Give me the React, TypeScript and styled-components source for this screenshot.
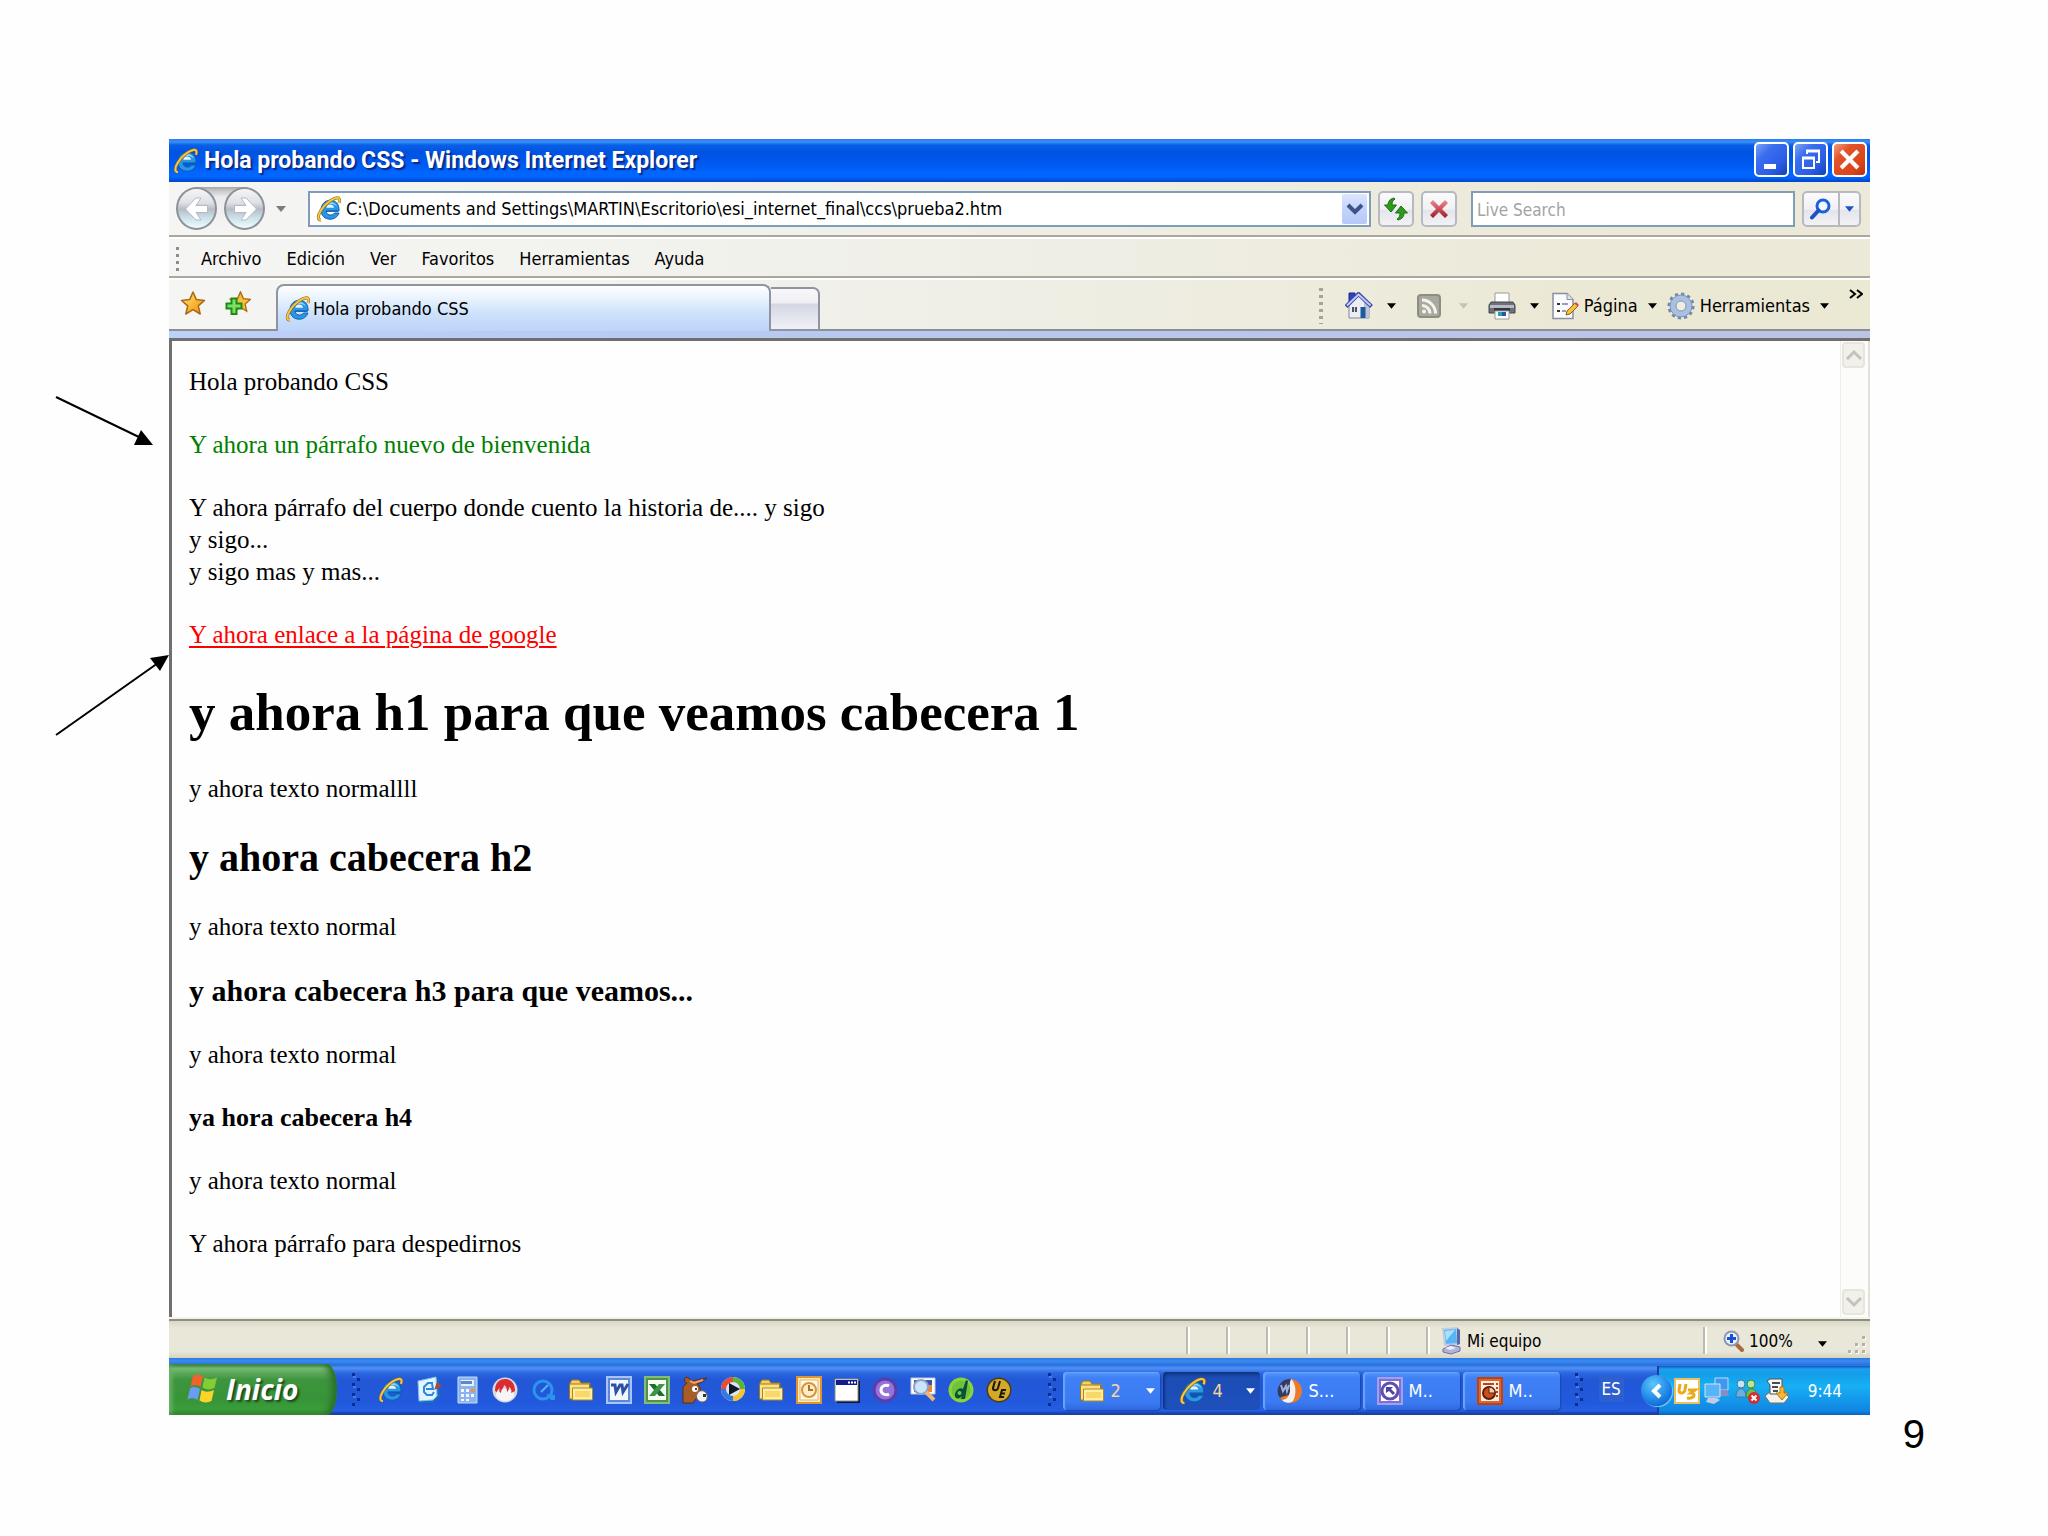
import React from "react";
import styled, { createGlobalStyle, css } from "styled-components";

const uiFont = `"DejaVu Sans Condensed", "Noto Sans", sans-serif`;
const pageFont = `"Liberation Serif", "Times New Roman", serif`;

const GlobalStyle = createGlobalStyle`
  *, *::before, *::after { box-sizing: border-box; }
  body { margin: 0; background: #fefefe; }
  button, input { font: inherit; color: inherit; }
  button { padding: 0; border: 0; background: none; }
`;

/* ---------- slide ---------- */

const Slide = styled.div`
  position: relative;
  display: flex;
  flex-direction: column;
  min-height: 100vh;
  padding: 139px 178px 0 169px;
  font-family: ${uiFont};
`;

const SlideFooter = styled.footer`
  display: flex;
  justify-content: flex-end;
  height: 121px;
  margin-right: -55px;
  font: 40px/38px "Liberation Sans", Arial, sans-serif;
  color: #000;
`;

const Arrow = styled.svg<{ $left: number; $top: number }>`
  position: absolute;
  left: ${(p) => p.$left}px;
  top: ${(p) => p.$top}px;
  overflow: visible;
`;

/* ---------- browser window ---------- */

const Window = styled.main`
  display: flex;
  flex: 1;
  flex-direction: column;
  background: #ece9d8;
`;

const TitleBar = styled.header`
  display: flex;
  align-items: center;
  gap: 5px;
  height: 43px;
  padding: 0 3px 0 4px;
  background: linear-gradient(#2a7cf0 0, #3a8ef6 3px, #0a5fe8 6px, #0053e1 13px, #0058ee 24px, #0066ff 34px, #0066ff 38px, #0049d2 42px);
`;

const Title = styled.h1`
  flex: 1;
  margin: 0;
  font: bold 23px/28px Roboto, sans-serif;
  color: #fff;
  text-shadow: 2px 2px 1px #0a2a8c;
`;

const Caption = styled.div`
  display: flex;
  gap: 4px;
  margin-bottom: 2px;
`;

const CaptionButton = styled.button<{ $close?: boolean }>`
  display: grid;
  place-items: center;
  width: 35px;
  height: 35px;
  border: 2px solid #fff;
  border-radius: 5px;
  background: ${(p) =>
    p.$close
      ? "linear-gradient(135deg, #f0a080 0, #e2522a 30%, #dc4418 75%, #b8300c)"
      : "linear-gradient(135deg, #7ea4f4 0, #3c6ef0 30%, #2a5ce6 70%, #1440b8)"};
`;

const toolbarPaint = css`
  background: linear-gradient(90deg, #f5f5f4 0, #f1f1ec 35%, #ece9d8 85%);
  border-bottom: 2px solid #aaa89c;
`;

const AddressBar = styled.div`
  display: flex;
  align-items: center;
  height: 55px;
  padding: 0 9px 0 7px;
  ${toolbarPaint}
`;

const NavButtons = styled.div`
  display: flex;
  gap: 7px;
  margin-right: 10px;
  border-radius: 22px;
  background: linear-gradient(#a8a8a8 0, #c9cacc 4px, #ececee 10px, #f4f4f5);
`;

const NavButton = styled.button`
  display: grid;
  place-items: center;
  width: 41px;
  height: 43px;
  border: 2px solid #8d9299;
  border-radius: 50%;
  background: linear-gradient(#f4f5f6 0, #dfe1e5 35%, #b6bcc6 52%, #cde3ea 75%, #effcfe);
`;

const AddressField = styled.div`
  display: flex;
  flex: 1;
  align-items: center;
  gap: 4px;
  height: 36px;
  margin-left: 21px;
  padding: 0 2px 0 6px;
  border: 2px solid #7f9db9;
  background: #fff;
`;

const AddressInput = styled.input`
  flex: 1;
  min-width: 0;
  padding: 0;
  border: 0;
  outline: 0;
  background: none;
  font-size: 18px;
  line-height: 24px;
  color: #000;
`;

const DropButton = styled.button`
  display: grid;
  place-items: center;
  width: 25px;
  height: 30px;
  border-radius: 2px;
  background: linear-gradient(#dce6fd, #c3d3fb 50%, #b5c8f8);
`;

const ToolButton = styled.button`
  display: grid;
  place-items: center;
  width: 36px;
  height: 36px;
  margin-left: 7px;
  border: 2px solid #b7b9c2;
  border-radius: 5px;
  background: linear-gradient(#fbfbfc, #f1f1f4 50%, #e4e5ec 55%, #f2f2f5);
`;

const SearchField = styled.input`
  width: 324px;
  height: 36px;
  margin: 0 0 0 14px;
  padding: 2px 4px 0;
  border: 2px solid #7f9db9;
  border-radius: 0;
  background: #fff;
  font-size: 17px;
  &::placeholder { color: #a3a3a3; opacity: 1; }
`;

const SearchButtons = styled.div`
  display: flex;
  height: 36px;
  margin-left: 7px;
  border: 2px solid #b7b9c2;
  border-radius: 5px;
  background: linear-gradient(#fbfbfc, #f1f1f4 50%, #e4e5ec 55%, #f2f2f5);
  button { display: grid; place-items: center; width: 34px; }
  button + button { width: 21px; border-left: 2px solid #b7b9c2; }
`;

const MenuBar = styled.nav`
  display: flex;
  align-items: center;
  gap: 25px;
  height: 41px;
  padding: 2px 7px 0;
  border-top: 2px solid #fff;
  ${toolbarPaint}
`;

const MenuItem = styled.button`
  font-size: 18px;
  line-height: 24px;
  color: #000;
`;

const MenuGrip = styled.span`
  width: 3px;
  height: 24px;
  margin-right: -3px;
  background: repeating-linear-gradient(#8e8d88 0 3px, transparent 3px 7px);
`;

const TabRow = styled.div`
  display: flex;
  align-items: flex-end;
  height: 53px;
  padding-top: 4px;
  background: linear-gradient(90deg, #f5f5f4 0, #f1f1ec 35%, #ebe8d4 85%);
  border-top: 2px solid #fff;
`;

const Favorites = styled.div`
  display: flex;
  align-items: center;
  gap: 19px;
  align-self: stretch;
  width: 107px;
  padding: 0 0 2px 11px;
  border-bottom: 2px solid #8d8f98;
`;

const Tab = styled.button`
  display: flex;
  align-items: center;
  gap: 2px;
  width: 495px;
  align-self: stretch;
  padding: 0 0 0 7px;
  border: 2px solid #8d94a2;
  border-bottom: 0;
  border-radius: 8px 8px 0 0;
  background: linear-gradient(#fff 0, #e6f1fd 14px, #cde1fb 28px, #bdd4fa);
  font-size: 18px;
  color: #000;
`;

const NewTab = styled.button`
  width: 49px;
  height: 44px;
  border: 2px solid #9093a0;
  border-left: 0;
  border-radius: 0 7px 0 0;
  background: linear-gradient(#f8f8fa 0, #eeeef5 14px, #d4d6e4 15px, #f0f1f6);
`;

const Commands = styled.div`
  display: flex;
  flex: 1;
  align-items: center;
  justify-content: flex-end;
  align-self: stretch;
  padding: 0 7px 2px 0;
  border-bottom: 2px solid #8d8f98;
`;

const CommandGrip = styled.span`
  width: 4px;
  height: 36px;
  margin-right: 22px;
  background: repeating-linear-gradient(#a5a498 0 3px, transparent 3px 7px);
`;

const Command = styled.button<{ $after: number; $gap?: number }>`
  display: flex;
  align-items: center;
  gap: ${(p) => p.$gap ?? 5}px;
  margin-right: ${(p) => p.$after}px;
  font-size: 18px;
  line-height: 24px;
  color: #000;
  svg:last-child { margin-left: 5px; }
`;

const MoreButton = styled.button`
  align-self: flex-start;
`;

const BlueBand = styled.div`
  height: 7px;
  background: linear-gradient(90deg, #bdd0f8, #b8c9f0 40%, #bcc4e4);
`;

/* ---------- viewed page ---------- */

const Viewport = styled.div`
  display: flex;
  flex: 1;
  border: solid #6f6f6f;
  border-width: 3px 0 0 3px;
  background: #fefefe;
`;

const Page = styled.article`
  display: flex;
  flex: 1;
  flex-direction: column;
  align-items: flex-start;
  gap: 31px;
  padding: 25px 17px;
  font-family: ${pageFont};
  color: #000;
`;

const Para = styled.p<{ $color?: string }>`
  margin: 0;
  font-size: 25px;
  line-height: 32px;
  color: ${(p) => p.$color ?? "#000"};
`;

const PageLink = styled.a`
  color: #f00;
  text-decoration: underline;
  text-decoration-thickness: 2px;
  text-underline-offset: 3px;
`;

const headingSizes = { 1: [53, 60], 2: [40, 44], 3: [30, 34], 4: [26, 32] } as const;

const Heading = styled.h2<{ $level: 1 | 2 | 3 | 4 }>`
  margin: 0;
  font-size: ${(p) => headingSizes[p.$level][0]}px;
  line-height: ${(p) => headingSizes[p.$level][1]}px;
  font-weight: bold;
`;

const ScrollTrack = styled.div`
  display: flex;
  flex-direction: column;
  justify-content: space-between;
  width: 30px;
  padding: 1px 3px 4px 1px;
  border-left: 1px solid #eeede8;
  border-right: 2px solid #e4e2d8;
  background: #fcfcfb;
`;

const ScrollButton = styled.button`
  display: grid;
  place-items: center;
  height: 26px;
  border: 2px solid #e6e5de;
  border-radius: 4px;
  background: #f1f0ea;
`;

const StatusBar = styled.div`
  display: flex;
  align-items: stretch;
  height: 39px;
  padding: 6px 4px 4px 0;
  border-top: 2px solid #8f8e80;
  background: linear-gradient(#d9d7c6 0, #e8e7d8 7px, #e9e7d9 30px, #d8d5be);
  box-shadow: 0 -2px 0 #f4f3ec;
  font-size: 17px;
  color: #000;
`;

const StatusPane = styled.div<{ $width: number; $pad?: number }>`
  display: flex;
  align-items: center;
  gap: 5px;
  width: ${(p) => p.$width}px;
  padding-left: ${(p) => p.$pad ?? 0}px;
  border-left: 2px solid #bdbbab;
  box-shadow: inset 2px 0 0 #fff;
`;

const StatusMessage = styled.div`
  flex: 1;
`;

const ZoomButton = styled.button`
  display: flex;
  align-items: center;
  gap: 4px;
  margin-right: 20px;
`;

/* ---------- taskbar ---------- */

const Taskbar = styled.nav`
  display: flex;
  align-items: stretch;
  height: 57px;
  background: linear-gradient(#2b78e4 0, #3a8bf0 3px, #2a6ee0 7px, #4f92f5 10px, #2b66e0 15px, #2257d6 22px, #2259dc 45px, #2360e4 53px, #1941a8 55px);
`;

const StartButton = styled.button`
  display: flex;
  align-items: center;
  gap: 8px;
  width: 173px;
  margin-top: 6px;
  padding: 0 0 2px 18px;
  border-radius: 0 10px 10px 0 / 0 50% 50% 0;
  background: linear-gradient(#2f7a2f 0, #7dc07d 4px, #5aa85a 9px, #3d953d 16px, #389438 36px, #3a9f3a 46px, #2b7a2b);
  box-shadow: inset -5px 0 6px #2a702a, inset 3px 0 4px #6db56d;
  font: italic bold 28px/36px "Open Sans", sans-serif;
  color: #fff;
  text-shadow: 2px 2px 2px #1c4a1c;
`;

const TaskGrip = styled.svg`
  flex: none;
  align-self: center;
  margin: 6px 15px 0;
`;

const QuickLaunch = styled.div`
  display: flex;
  align-items: center;
  gap: 12px;
  padding-top: 6px;
  margin: 0 21px 0 2px;
`;

const IconButton = styled.button`
  display: grid;
  place-items: center;
  width: 26px;
  height: 28px;
`;

const Tasks = styled.div`
  display: flex;
  align-items: center;
  gap: 3px;
  flex: 1;
  margin-left: -9px;
  padding: 8px 0 0;
`;

const TaskButton = styled.button<{ $active?: boolean; $group?: boolean }>`
  display: flex;
  align-items: center;
  gap: 6px;
  width: 97px;
  height: 38px;
  padding: 0 5px 0 ${(p) => (p.$group ? 16 : 14)}px;
  border-radius: 4px;
  background: ${(p) =>
    p.$active
      ? "linear-gradient(#163f98, #1c4cb4 6px, #1e50bc)"
      : "linear-gradient(#5a98fa, #3f80f6 6px, #3b7bf2 30px, #2f68e0)"};
  box-shadow: ${(p) => (p.$active ? "inset 2px 2px 2px #12357f" : "inset 2px 1px 1px #6aa4fb, 1px 1px 1px #1c48b0")};
  font-size: 18px;
  color: ${(p) => (p.$group ? "#f7d59c" : "#fff")};
  svg:last-child:not(:first-child) { margin-left: auto; }
`;

const Language = styled.button`
  align-self: center;
  width: 26px;
  height: 26px;
  margin: 5px 16px 0 0;
  background: #2c60d0;
  font-size: 17px;
  line-height: 26px;
  color: #fff;
`;

const Tray = styled.div`
  display: flex;
  align-items: center;
  gap: 4px;
  height: 49px;
  margin: 8px 0 0 17px;
  padding-right: 28px;
  border-left: 2px solid #1c3f9c;
  background: linear-gradient(#0c59b9 0, #1c9ff2 3px, #139ee9 8px, #18b0f4 20px, #128de6 40px, #0f86e4 45px, #0c5fbd);
`;

const TrayChevron = styled.button`
  display: grid;
  place-items: center;
  width: 31px;
  height: 31px;
  margin: 0 -2px 0 -18px;
  border-radius: 50%;
  background: radial-gradient(circle at 40% 30%, #5ac8fa, #1a80e4 60%, #0c50b8);
  box-shadow: 1px 1px 1px #7fd2fb;
`;

const Clock = styled.time`
  margin-left: 14px;
  font-size: 17px;
  color: #fff;
`;

/* ---------- icons ---------- */

const IeIcon = ({ size = 26 }: { size?: number }) => (
  <svg width={size} height={size} viewBox="0 0 26 26" fill="none" aria-hidden="true">
    <path d="M23 15H10c.5 3 2 4 4.500 4 2 0 3-.6 4-2h4.500c-1.500 4-4.700 6.200-8.800 6.200C8.800 23.200 5 19.500 5 14s4-9.700 9.300-9.700S23.500 8 23 15z" fill="#2a96e4" stroke="#0c5cac" />
    <path d="M7 12c1-4 4-6 7.500-6 3 0 5.500 1.600 6.500 4.500-2-2-4-2.500-6.500-2.500S9.500 9 7 12z" fill="#8ad4fa" />
    <path d="M10.200 11.700c.6-2.200 2-3.200 4-3.200s3.400 1 3.800 3.200z" fill="#e4f4ff" />
    <path d="M10.200 15.300H22" stroke="#0c5cac" />
    <path d="M5 24c-3.400.3-3.600-4-.2-9.400C8.500 8.700 15.500 2.600 20.500 1.900c3.300-.4 3.700 2.100 2.400 5" stroke="#8a6414" strokeWidth="3" />
    <path d="M5 24c-3.400.3-3.600-4-.2-9.400C8.500 8.700 15.500 2.600 20.500 1.900c3.300-.4 3.700 2.100 2.400 5" stroke="#f6c744" strokeWidth="2" />
  </svg>
);

const Triangle = ({ color = "#000", width = 10 }: { color?: string; width?: number }) => (
  <svg width={width} height="6" viewBox="0 0 10 6" aria-hidden="true">
    <path d="M0 0h10L5 6z" fill={color} />
  </svg>
);

const NavArrow = ({ forward }: { forward?: boolean }) => (
  <svg width="28" height="26" viewBox="0 0 28 26" aria-hidden="true">
    <path
      d={forward ? "M15 2l10.500 11L15 24h-5l5-7.500H3.500v-7H15L10 2z" : "M13 2L2.500 13 13 24h5l-5-7.500h11.500v-7H13L18 2z"}
      fill="#fff" stroke="#b4bac4"
    />
  </svg>
);

const Chevron = ({ color, up, width = 3 }: { color: string; up?: boolean; width?: number }) => (
  <svg width="18" height="12" viewBox="0 0 18 12" fill="none" aria-hidden="true">
    <path d={up ? "M2 10l7-7 7 7" : "M2 2l7 7 7-7"} stroke={color} strokeWidth={width} />
  </svg>
);

const MinimizeIcon = () => (
  <svg width="24" height="24" aria-hidden="true"><path d="M4 16h12v5H4z" fill="#fff" /></svg>
);

const RestoreIcon = () => (
  <svg width="24" height="24" viewBox="0 0 24 24" fill="none" aria-hidden="true">
    <path d="M8 6V3h12v11h-3" stroke="#fff" strokeWidth="2" /><path d="M7 3h14" stroke="#fff" strokeWidth="3" />
    <path d="M4 10h11v10H4z" stroke="#fff" strokeWidth="2" /><path d="M3 10h13" stroke="#fff" strokeWidth="3" />
  </svg>
);

const CrossIcon = () => (
  <svg width="21" height="21" viewBox="0 0 20 20" aria-hidden="true">
    <path d="M2 2l16 16M18 2L2 18" stroke="#fff" strokeWidth="4" />
  </svg>
);

const RefreshIcon = () => (
  <svg width="26" height="26" viewBox="0 0 26 26" aria-hidden="true">
    <path d="M11 2C6.500 3 5 6 5 9H1.500L8 16l5.500-7H9C9 6.500 9.500 4.500 12 3z" fill="#2f9a1c" stroke="#1d7010" />
    <path d="M15 24c4.500-1 6-4 6-7h3.500L18 10l-5.500 7H17c0 2.500-.5 5-3 6z" fill="#2f9a1c" stroke="#1d7010" />
  </svg>
);

const StopIcon = () => (
  <svg width="20" height="20" viewBox="0 0 20 20" aria-hidden="true">
    <defs><linearGradient id="stop" x2="0" y2="1"><stop stopColor="#f08a92" /><stop offset="1" stopColor="#a01824" /></linearGradient></defs>
    <path d="M4 1l6 6 6-6 3 3-6 6 6 6-3 3-6-6-6 6-3-3 6-6-6-6z" fill="url(#stop)" />
  </svg>
);

const SearchIcon = () => (
  <svg width="24" height="22" viewBox="0 0 24 22" fill="none" aria-hidden="true">
    <circle cx="14" cy="8" r="6" fill="#f4f9ff" stroke="#1c5fe0" strokeWidth="3" />
    <path d="M9.500 12.500L3 19.500" stroke="#1c4fc8" strokeWidth="4" strokeLinecap="round" />
  </svg>
);

const starPath = "M13 1l3.300 7.600 8.200.8-6.200 5.500 1.900 8.100L13 18.700 5.800 23l1.900-8.100L1.500 9.400l8.200-.8z";

const StarIcon = () => (
  <svg width="26" height="26" viewBox="0 0 26 26" aria-hidden="true">
    <defs><linearGradient id="star" x2="1" y2="1"><stop stopColor="#fff0a0" /><stop offset=".5" stopColor="#fbb938" /><stop offset="1" stopColor="#f08c10" /></linearGradient></defs>
    <path d={starPath} fill="url(#star)" stroke="#a86a10" strokeWidth="1.500" strokeLinejoin="round" />
  </svg>
);

const AddStarIcon = () => (
  <svg width="26" height="26" viewBox="0 0 26 26" aria-hidden="true">
    <path d={starPath} transform="translate(4) scale(.88)" fill="#f9c040" stroke="#a86a10" strokeWidth="1.500" />
    <path d="M6.500 7.500h5v5h5v5h-5v5.500h-5v-5.500h-5v-5h5z" fill="#7ee060" stroke="#1c8a18" strokeWidth="2" />
  </svg>
);

const HomeIcon = () => (
  <svg width="28" height="28" viewBox="0 0 28 28" aria-hidden="true">
    <path d="M4 1h6v9H4z" fill="#2c40c8" stroke="#1c2878" />
    <path d="M4 13L14 4l10 9v13H4z" fill="#eceef4" stroke="#7e86a0" />
    <path d="M19 9l5 4v13h-5z" fill="#bcc4d8" />
    <path d="M1 14.500L13.500 2l13 12.500" fill="none" stroke="#3c46b8" strokeWidth="4" />
    <path d="M2 13.500L13.500 2.500l12 11" fill="none" stroke="#c8ccec" strokeWidth="2" />
    <path d="M15.500 15h5v11h-5z" fill="#1c5c9c" /><path d="M7 15h5v5H7z" fill="#4a5468" /><path d="M9 15h1v5H9z" fill="#d8dcec" />
  </svg>
);

const FeedIcon = () => (
  <svg width="24" height="24" viewBox="0 0 24 24" fill="none" aria-hidden="true">
    <rect x="1" y="1" width="22" height="22" rx="3" fill="#a9a99f" stroke="#8d8d84" strokeWidth="2" />
    <circle cx="7" cy="17.500" r="2" fill="#f4f4ee" />
    <path d="M5 11.500a8 8 0 0 1 8 8M5 6a13.500 13.500 0 0 1 13.500 13.500" stroke="#f4f4ee" strokeWidth="3" />
  </svg>
);

const PrinterIcon = () => (
  <svg width="28" height="28" viewBox="0 0 28 28" aria-hidden="true">
    <path d="M7 1h14v10H7z" fill="#fff" stroke="#9a9a9a" />
    <path d="M3 10h22l2 3v8H1v-8z" fill="#6c7078" stroke="#44474e" />
    <path d="M2 13h24v3H2z" fill="#b8bcc4" /><path d="M6 16h16v3H6z" fill="#33363c" />
    <path d="M7 19h14v8H7z" fill="#fff" stroke="#9a9a9a" />
    <path d="M10 20h4v4h-4z" fill="#2ca0a8" /><path d="M14 20h4v4h-4z" fill="#2c54a8" />
  </svg>
);

const PageIcon = () => (
  <svg width="28" height="28" viewBox="0 0 28 28" fill="none" aria-hidden="true">
    <path d="M2 1.500h14l6 6V26.500H2z" fill="#fbfbfd" stroke="#8c8fa0" strokeWidth="1.500" />
    <path d="M16 1.500v6h6" fill="#dfe2ee" stroke="#8c8fa0" />
    <path d="M6 12h3M6 19h3" stroke="#333" strokeWidth="2" />
    <path d="M11 12h6M11 19h4" stroke="#9a9db8" strokeWidth="2" />
    <path d="M15 23l1-4 8-8 3 3-8 8z" fill="#f6c040" stroke="#8a6010" />
    <path d="M23.500 11.500l1.500-1.500 3 3-1.500 1.500z" fill="#d84848" />
  </svg>
);

const GearIcon = () => (
  <svg width="28" height="28" viewBox="0 0 28 28" fill="none" aria-hidden="true">
    <circle cx="14" cy="14" r="11.500" stroke="#6f87ae" strokeWidth="4" strokeDasharray="3 3" />
    <circle cx="14" cy="14" r="8" stroke="#a9c0e0" strokeWidth="6" />
    <circle cx="14" cy="14" r="11" stroke="#7d94b8" /><circle cx="14" cy="14" r="5" fill="#efeee0" stroke="#7d94b8" />
  </svg>
);

const MoreIcon = () => (
  <svg width="14" height="10" viewBox="0 0 14 10" fill="none" aria-hidden="true">
    <path d="M1 1l5 4-5 4M8 1l5 4-5 4" stroke="#000" strokeWidth="2" />
  </svg>
);

const ComputerIcon = () => (
  <svg width="22" height="28" viewBox="0 0 22 28" aria-hidden="true">
    <path d="M3 2l14-1 1 16-13 1z" fill="#58b4f4" stroke="#c4cce0" strokeWidth="2" />
    <path d="M5 4l10-1-9 11z" fill="#a8e0fc" />
    <path d="M17 1l3 2v14l-3 1z" fill="#5868a8" />
    <path d="M3 22l8-4 9 2v4l-9 3-8-2z" fill="#b0b4dc" stroke="#6c70a4" />
    <path d="M5 21l6-2 5 2-6 2z" fill="#eceefa" />
  </svg>
);

const ZoomIcon = () => (
  <svg width="22" height="22" viewBox="0 0 22 22" aria-hidden="true">
    <path d="M13 14l6 6" stroke="#a86c3c" strokeWidth="4" strokeLinecap="round" />
    <circle cx="8.500" cy="8.500" r="7" fill="#e6f0fe" stroke="#9098b4" strokeWidth="2" />
    <path d="M8.500 4v9M4 8.500h9" stroke="#1c50d0" strokeWidth="3" />
  </svg>
);

const gripDots = [[14, 0], [7, 7], [14, 7], [0, 14], [7, 14], [14, 14]];

const ResizeGrip = () => (
  <svg width="18" height="27" viewBox="0 -9 18 27" aria-hidden="true">
    {gripDots.map(([x, y]) => (
      <g key={`${x}-${y}`}><rect x={x + 1} y={y + 1} width="3" height="3" fill="#fff" /><rect x={x} y={y} width="3" height="3" fill="#b4b1a0" /></g>
    ))}
  </svg>
);

const WindowsLogo = () => (
  <svg width="31" height="31" viewBox="0 0 31 31" aria-hidden="true">
    <path d="M6 3c4-2.500 7-1.500 10 .5L13.500 14c-3-2-6-2.500-10-.5z" fill="#f0622c" />
    <path d="M17.500 4.500c4 2.500 8 2 12.500 0L27.500 15c-4 2-8 2-12-.5z" fill="#84cc34" />
    <path d="M3 15.500c4-2.500 7-1.500 10 .5L10.500 27c-3-2-6-2.500-10-.5z" fill="#6a9cf4" />
    <path d="M14.500 17c4 2.500 8 2 12.500 0L24.500 28c-4 2-8 2-12-.5z" fill="#fcd428" />
  </svg>
);

const GripDots = () => (
  <TaskGrip width="9" height="34" viewBox="0 0 9 34" aria-hidden="true">
    {[0, 10, 20, 30].map((y) => <rect key={y} y={y} width="3" height="3" fill="#0c2c90" />)}
    {[5, 15, 25].map((y) => <rect key={y} x="5" y={y} width="3" height="3" fill="#0c2c90" />)}
    {[3, 13, 23].map((y) => <rect key={y} x="1" y={y} width="3" height="2" fill="#3c80f4" />)}
  </TaskGrip>
);

const Glyph = ({ children }: { children: React.ReactNode }) => (
  <svg width="26" height="28" viewBox="0 0 26 28" fill="none" aria-hidden="true">{children}</svg>
);

const FolderIcon = () => (
  <Glyph>
    <path d="M2 7l2-3h7l2 3h9v4H2z" fill="#f4d060" stroke="#a07818" />
    <path d="M1.500 8h20v15h-20z" fill="#fbe288" stroke="#a07818" />
    <path d="M4.500 12h20v12h-20z" fill="#fdeea4" stroke="#b08820" />
    <path d="M7 15h15v6H7z" fill="#f8d868" />
  </Glyph>
);

const OutlookExpressIcon = () => (
  <Glyph>
    <path d="M4 4l19-2 1 19-7 6H4z" fill="#1c6cc0" /><path d="M2 5l18-4 1 19-4 4-14 1z" fill="#e4f4fe" stroke="#7cc0ec" />
    <path d="M17 7h-5l-4 4v5l3 3h5l2-3M10 13h7l-1-5" stroke="#2c88d8" strokeWidth="2" />
    <path d="M18 14l8-4-5-4z" fill="#a84c38" />
  </Glyph>
);

const CalculatorIcon = () => (
  <Glyph>
    <path d="M4 1h19v26H4z" fill="#8cb4ec" stroke="#c8dcf8" /><path d="M7 4h13v6H7z" fill="#e4f0fe" /><path d="M7 5h11v3H7z" fill="#6088c8" />
    <path d="M7 13h3v3H7zM12 13h3v3h-3zM7 18h3v3H7zM12 18h3v3h-3zM17 18h3v3h-3zM7 23h3v2H7zM12 23h3v2h-3z" fill="#f4f8fe" />
    <path d="M17 13h4v3h-4z" fill="#f49038" />
  </Glyph>
);

const NeroIcon = () => (
  <Glyph>
    <circle cx="13" cy="14" r="12.500" fill="#d8dae0" /><ellipse cx="13" cy="19" rx="9" ry="6" fill="#f6f6f8" />
    <path d="M3 15C3 6 8 3 13 3s10 3 10 12l-4 2c1-3 0-5-2-6 0 3-1 4-2 5 0-4-1-6-3-7 0 3-3 4-3 8-2-1-2-3-1-5-2 1-3 3-3 4z" fill="#dc2c30" />
  </Glyph>
);

const QuickTimeIcon = () => (
  <Glyph>
    <circle cx="13" cy="14" r="9" stroke="#2c94ec" strokeWidth="3" /><path d="M11 16l7-7" stroke="#50b4fc" strokeWidth="2" />
    <path d="M16 18l5 6h4v-5z" fill="#2c94ec" />
  </Glyph>
);

const WordIcon = () => (
  <Glyph>
    <path d="M1 1h24v26H1z" fill="#5c88dc" stroke="#a8c4f4" strokeWidth="2" /><path d="M4 4h18v20H4z" fill="#f4f8fe" />
    <path d="M5 9h4l1 7 4-7h2l1 7 5-8" stroke="#2c50a8" strokeWidth="3" />
  </Glyph>
);

const ExcelIcon = () => (
  <Glyph>
    <path d="M1 1h24v26H1z" fill="#4c9448" stroke="#84bc78" strokeWidth="2" /><path d="M4 4h18v20H4z" fill="#f6fcf4" />
    <path d="M5 8h6l10 12h-6z" fill="#1c6c2c" /><path d="M15 8h6L11 20H5z" fill="#3c9444" />
  </Glyph>
);

const DonkeyIcon = () => (
  <Glyph>
    <path d="M1 27V11l4-4C1 6 2 2 5 1l5 4 15-3-5 4-5 2c3 2 4 6 3 9l-7 10z" fill="#a85c28" stroke="#5c2c10" />
    <path d="M8 5l4 2 9-3" stroke="#e8a070" strokeWidth="2" />
    <path d="M15 18c2-5 9-4 10 1s-2 7-5 7-7-4-5-8z" fill="#f4f2f0" stroke="#70686a" />
    <circle cx="13" cy="13" r="3" fill="#fff" /><circle cx="14" cy="13" r="1" fill="#000" /><path d="M21 18h3v3h-3z" fill="#333" />
  </Glyph>
);

const MediaPlayerIcon = () => (
  <Glyph>
    <circle cx="13" cy="13" r="12" fill="#e8ecf4" />
    <path d="M13 13V1A12 12 0 0 0 1 13z" fill="#e84c34" /><path d="M13 13V1a12 12 0 0 1 12 12z" fill="#5cb43c" />
    <path d="M13 13H1a12 12 0 0 0 12 12z" fill="#3478e0" /><path d="M13 13v12a12 12 0 0 0 12-12z" fill="#f4c42c" />
    <circle cx="13" cy="13" r="7" fill="#dce4f2" /><path d="M9 7l11 6-11 6z" fill="#101828" />
  </Glyph>
);

const OutlookIcon = () => (
  <Glyph>
    <path d="M1 1h24v26H1z" fill="#fbeac0" stroke="#e0942c" strokeWidth="2" />
    <path d="M4 4h18v20H4z" fill="#fff8e4" stroke="#e8b460" /><circle cx="13" cy="14" r="7" fill="#fdeec4" stroke="#d49440" strokeWidth="2" />
    <path d="M13 9v5h4" stroke="#b87024" strokeWidth="2" />
  </Glyph>
);

const WindowIcon = () => (
  <Glyph>
    <path d="M3 5h23v22H3z" fill="#10183c" /><path d="M1 3h23v22H1z" fill="#fff" stroke="#888" /><path d="M2 4h21v5H2z" fill="#101c8c" />
    <path d="M14 5.500h2v2h-2zM17 5.500h2v2h-2zM20 5.500h2v2h-2z" fill="#fff" />
  </Glyph>
);

const PurpleDiscIcon = () => (
  <Glyph>
    <circle cx="13" cy="14" r="12.500" fill="#5c3ca8" /><circle cx="13" cy="14" r="9.500" fill="#9474dc" />
    <path d="M17 10c-3-2-8 0-8 4s5 6 8 4" stroke="#fff" strokeWidth="3" />
  </Glyph>
);

const FinderIcon = () => (
  <Glyph>
    <path d="M1 2h24v16H1z" fill="#fff" stroke="#c4c8d4" /><path d="M4 4h18v12H4z" fill="#3454b4" /><path d="M14 9h8v7h-8z" fill="#f08434" />
    <circle cx="11" cy="11" r="7" fill="#cce4fa" stroke="#8ca4c8" strokeWidth="2" /><path d="M16 16l8 8" stroke="#f0b474" strokeWidth="4" />
  </Glyph>
);

const DreamweaverIcon = () => (
  <Glyph>
    <circle cx="13" cy="14" r="12.500" fill="#8cd434" /><circle cx="13" cy="14" r="9.500" fill="#6cc43c" />
    <path d="M18 4l2 1-3 18h-4l1-3c-3 4-8 3-7-2 1-4 5-7 8-5z" fill="#08503c" /><circle cx="11.500" cy="17" r="2" fill="#74c840" />
  </Glyph>
);

const UltraEditIcon = () => (
  <Glyph>
    <circle cx="13" cy="14" r="12.500" fill="#4c3c10" /><circle cx="13" cy="14" r="11" fill="#d4a828" />
    <path d="M9 5L7 12c0 3 4 3 5 0l2-7M20 14h-4l-2 7h4M15 17.500h4" stroke="#1c1808" strokeWidth="2" />
  </Glyph>
);

const FirefoxTaskIcon = () => (
  <Glyph>
    <circle cx="13" cy="14" r="12" fill="#ec7a28" /><path d="M14 2A12 12 0 0 0 3 21c4-3 9-1 11-6z" fill="#303c60" />
    <path d="M5 23c6-1 7-4 8-9 0-4-1-8 1-12 5 4 6 15 2 22-4 3-8 2-11-1z" fill="#f4f2ee" /><path d="M4 8l2 6 3-5 1 5 2-6" stroke="#a4b0dc" strokeWidth="2" />
  </Glyph>
);

const CursorTaskIcon = () => (
  <Glyph>
    <path d="M1 1h24v26H1z" fill="#7c70d0" stroke="#a89cec" strokeWidth="2" /><path d="M4 4h18v20H4z" fill="#fff" />
    <circle cx="13" cy="14" r="8" stroke="#5c50b4" strokeWidth="3" /><path d="M9 10h7l-2 2 4 4-2 2-4-4-3 2z" fill="#4c40a4" />
  </Glyph>
);

const PowerPointIcon = () => (
  <Glyph>
    <path d="M1 1h24v26H1z" fill="#e0642c" stroke="#b84418" strokeWidth="2" /><path d="M4 4h18v20H4z" fill="#fdeee4" />
    <path d="M6 7h11M19 7h2M19 11h2M19 15h2M19 19h2" stroke="#b84418" strokeWidth="2" /><circle cx="12" cy="16" r="6" fill="#c85020" stroke="#5c2008" strokeWidth="2" /><path d="M12 16v-6a6 6 0 0 1 6 6z" fill="#fdc8a4" stroke="#5c2008" />
  </Glyph>
);

const U3Icon = () => (
  <Glyph>
    <path d="M1 2h24v24H1z" fill="#fff" stroke="#ecc060" strokeWidth="2" />
    <path d="M6 7l-1 6c0 4 5 4 6 0l1-6M14 13h7l-4 3c5 0 4 6-4 5" stroke="#eca818" strokeWidth="3" />
  </Glyph>
);

const NetworkIcon = () => (
  <Glyph>
    <path d="M11 1h13v12H11z" fill="#3c98f0" stroke="#c4d8f4" /><path d="M15 13h8l2 6H14z" fill="#8490c4" />
    <path d="M1 7h15v13H1z" fill="#58b4f8" stroke="#d4e4f8" /><path d="M4 21h9l3 2-6 4-8-2z" fill="#c4cae8" />
  </Glyph>
);

const MessengerIcon = () => (
  <Glyph>
    <circle cx="7" cy="7" r="4" fill="#c8e4f4" stroke="#3c78a8" /><path d="M2 20c0-11 10-11 10 0z" fill="#6cb0dc" stroke="#3c78a8" />
    <circle cx="17" cy="7" r="4" fill="#b8e4a0" stroke="#3c8c3c" /><path d="M12 20c0-11 11-11 11 0z" fill="#6cc04c" stroke="#3c8c3c" />
    <circle cx="20" cy="21" r="6" fill="#d42c30" /><path d="M17.500 18.500l5 5M22.500 18.500l-5 5" stroke="#fff" strokeWidth="2" />
  </Glyph>
);

const UpdateIcon = () => (
  <Glyph>
    <path d="M1 19l6-5h11l7 6-5 6H6z" fill="#f4f2ea" stroke="#70706c" />
    <path d="M3 4l3-2h12v12l-4 3H6V8z" fill="#f8f8f4" stroke="#505050" /><path d="M8 6h8M8 10h6M9 14h5" stroke="#484c58" strokeWidth="2" />
    <path d="M16 10h4v6h4l-6 7-6-7h4z" fill="#f8b830" stroke="#b07818" />
  </Glyph>
);

/* ---------- data ---------- */

const menuItems = ["Archivo", "Edición", "Ver", "Favoritos", "Herramientas", "Ayuda"];

const quickLaunch: [string, React.ComponentType][] = [
  ["Internet Explorer", IeIcon],
  ["Outlook Express", OutlookExpressIcon],
  ["Calculadora", CalculatorIcon],
  ["Nero", NeroIcon],
  ["QuickTime", QuickTimeIcon],
  ["Carpeta", FolderIcon],
  ["Word", WordIcon],
  ["Excel", ExcelIcon],
  ["eMule", DonkeyIcon],
  ["Reproductor", MediaPlayerIcon],
  ["Documentos", FolderIcon],
  ["Outlook", OutlookIcon],
  ["Ventana", WindowIcon],
  ["Disco", PurpleDiscIcon],
  ["Buscar", FinderIcon],
  ["Dreamweaver", DreamweaverIcon],
  ["UltraEdit", UltraEditIcon],
];

const App = () => (
  <>
    <GlobalStyle />
    <Slide>
      <Arrow $left={55} $top={396} width="98" height="50" aria-hidden="true">
        <path d="M1 1l85 41" stroke="#000" strokeWidth="2" />
        <path d="M86 34l12 15H79z" />
      </Arrow>
      <Arrow $left={55} $top={654} width="114" height="82" aria-hidden="true">
        <path d="M1 81L103 9" stroke="#000" strokeWidth="2" />
        <path d="M114 1L95 4l10 13z" />
      </Arrow>

      <Window>
        <TitleBar>
          <IeIcon />
          <Title>Hola probando CSS - Windows Internet Explorer</Title>
          <Caption>
            <CaptionButton aria-label="Minimizar"><MinimizeIcon /></CaptionButton>
            <CaptionButton aria-label="Restaurar"><RestoreIcon /></CaptionButton>
            <CaptionButton $close aria-label="Cerrar"><CrossIcon /></CaptionButton>
          </Caption>
        </TitleBar>

        <AddressBar>
          <NavButtons>
            <NavButton aria-label="Atrás"><NavArrow /></NavButton>
            <NavButton aria-label="Adelante"><NavArrow forward /></NavButton>
          </NavButtons>
          <Triangle color="#7c7c7c" width={12} />
          <AddressField>
            <IeIcon />
            <AddressInput
              aria-label="Dirección"
              defaultValue={"C:\\Documents and Settings\\MARTIN\\Escritorio\\esi_internet_final\\ccs\\prueba2.htm"}
            />
            <DropButton aria-label="Mostrar direcciones"><Chevron color="#3c5488" width={4} /></DropButton>
          </AddressField>
          <ToolButton aria-label="Actualizar"><RefreshIcon /></ToolButton>
          <ToolButton aria-label="Detener"><StopIcon /></ToolButton>
          <SearchField aria-label="Buscar" placeholder="Live Search" />
          <SearchButtons>
            <button aria-label="Buscar en la Web"><SearchIcon /></button>
            <button aria-label="Opciones de búsqueda"><Triangle color="#1c50d0" width={9} /></button>
          </SearchButtons>
        </AddressBar>

        <MenuBar>
          <MenuGrip />
          {menuItems.map((item) => <MenuItem key={item}>{item}</MenuItem>)}
        </MenuBar>

        <TabRow>
          <Favorites>
            <button aria-label="Favoritos"><StarIcon /></button>
            <button aria-label="Agregar a Favoritos"><AddStarIcon /></button>
          </Favorites>
          <Tab><IeIcon />Hola probando CSS</Tab>
          <NewTab aria-label="Nueva pestaña" />
          <Commands>
            <CommandGrip />
            <Command $after={21} $gap={9} aria-label="Página principal"><HomeIcon /><Triangle width={9} /></Command>
            <Command $after={20} $gap={13} aria-label="Fuentes"><FeedIcon /><Triangle width={9} color="#c4c2b4" /></Command>
            <Command $after={12} $gap={9} aria-label="Imprimir"><PrinterIcon /><Triangle width={9} /></Command>
            <Command $after={10}><PageIcon />Página<Triangle width={9} /></Command>
            <Command $after={20}><GearIcon />Herramientas<Triangle width={9} /></Command>
            <MoreButton aria-label="Más"><MoreIcon /></MoreButton>
          </Commands>
        </TabRow>
        <BlueBand />

        <Viewport>
          <Page>
            <Para>Hola probando CSS</Para>
            <Para $color="#008000">Y ahora un párrafo nuevo de bienvenida</Para>
            <Para>
              Y ahora párrafo del cuerpo donde cuento la historia de.... y sigo
              <br />y sigo...
              <br />y sigo mas y mas...
            </Para>
            <Para><PageLink href="#google">Y ahora enlace a la página de google</PageLink></Para>
            <Heading $level={1} as="h1">y ahora h1 para que veamos cabecera 1</Heading>
            <Para>y ahora texto normallll</Para>
            <Heading $level={2}>y ahora cabecera h2</Heading>
            <Para>y ahora texto normal</Para>
            <Heading $level={3} as="h3">y ahora cabecera h3 para que veamos...</Heading>
            <Para>y ahora texto normal</Para>
            <Heading $level={4} as="h4">ya hora cabecera h4</Heading>
            <Para>y ahora texto normal</Para>
            <Para>Y ahora párrafo para despedirnos</Para>
          </Page>
          <ScrollTrack>
            <ScrollButton aria-label="Subir"><Chevron color="#c4c3ba" up /></ScrollButton>
            <ScrollButton aria-label="Bajar"><Chevron color="#c4c3ba" /></ScrollButton>
          </ScrollTrack>
        </Viewport>

        <StatusBar>
          <StatusMessage />
          {[0, 1, 2, 3, 4, 5].map((n) => <StatusPane key={n} $width={40} />)}
          <StatusPane $width={277} $pad={12}><ComputerIcon />Mi equipo</StatusPane>
          <StatusPane $width={145} $pad={18}>
            <ZoomButton><ZoomIcon />100%</ZoomButton>
            <button aria-label="Cambiar zoom"><Triangle width={9} /></button>
          </StatusPane>
          <ResizeGrip />
        </StatusBar>
      </Window>

      <Taskbar>
        <StartButton><WindowsLogo />Inicio</StartButton>
        <GripDots />
        <QuickLaunch>
          {quickLaunch.map(([name, Icon]) => <IconButton key={name} aria-label={name}><Icon /></IconButton>)}
        </QuickLaunch>
        <GripDots />
        <Tasks>
          <TaskButton $group><FolderIcon />2<Triangle color="#fff" width={9} /></TaskButton>
          <TaskButton $group $active><IeIcon size={28} />4<Triangle color="#fff" width={9} /></TaskButton>
          <TaskButton><FirefoxTaskIcon />S...</TaskButton>
          <TaskButton><CursorTaskIcon />M..</TaskButton>
          <TaskButton><PowerPointIcon />M..</TaskButton>
        </Tasks>
        <GripDots />
        <Language>ES</Language>
        <Tray>
          <TrayChevron aria-label="Mostrar iconos ocultos">
            <svg width="12" height="16" viewBox="0 0 12 16" fill="none" aria-hidden="true"><path d="M10 2L4 8l6 6" stroke="#fff" strokeWidth="4" /></svg>
          </TrayChevron>
          <U3Icon />
          <NetworkIcon />
          <MessengerIcon />
          <UpdateIcon />
          <Clock>9:44</Clock>
        </Tray>
      </Taskbar>
      <SlideFooter>9</SlideFooter>
    </Slide>
  </>
);

export default App;
